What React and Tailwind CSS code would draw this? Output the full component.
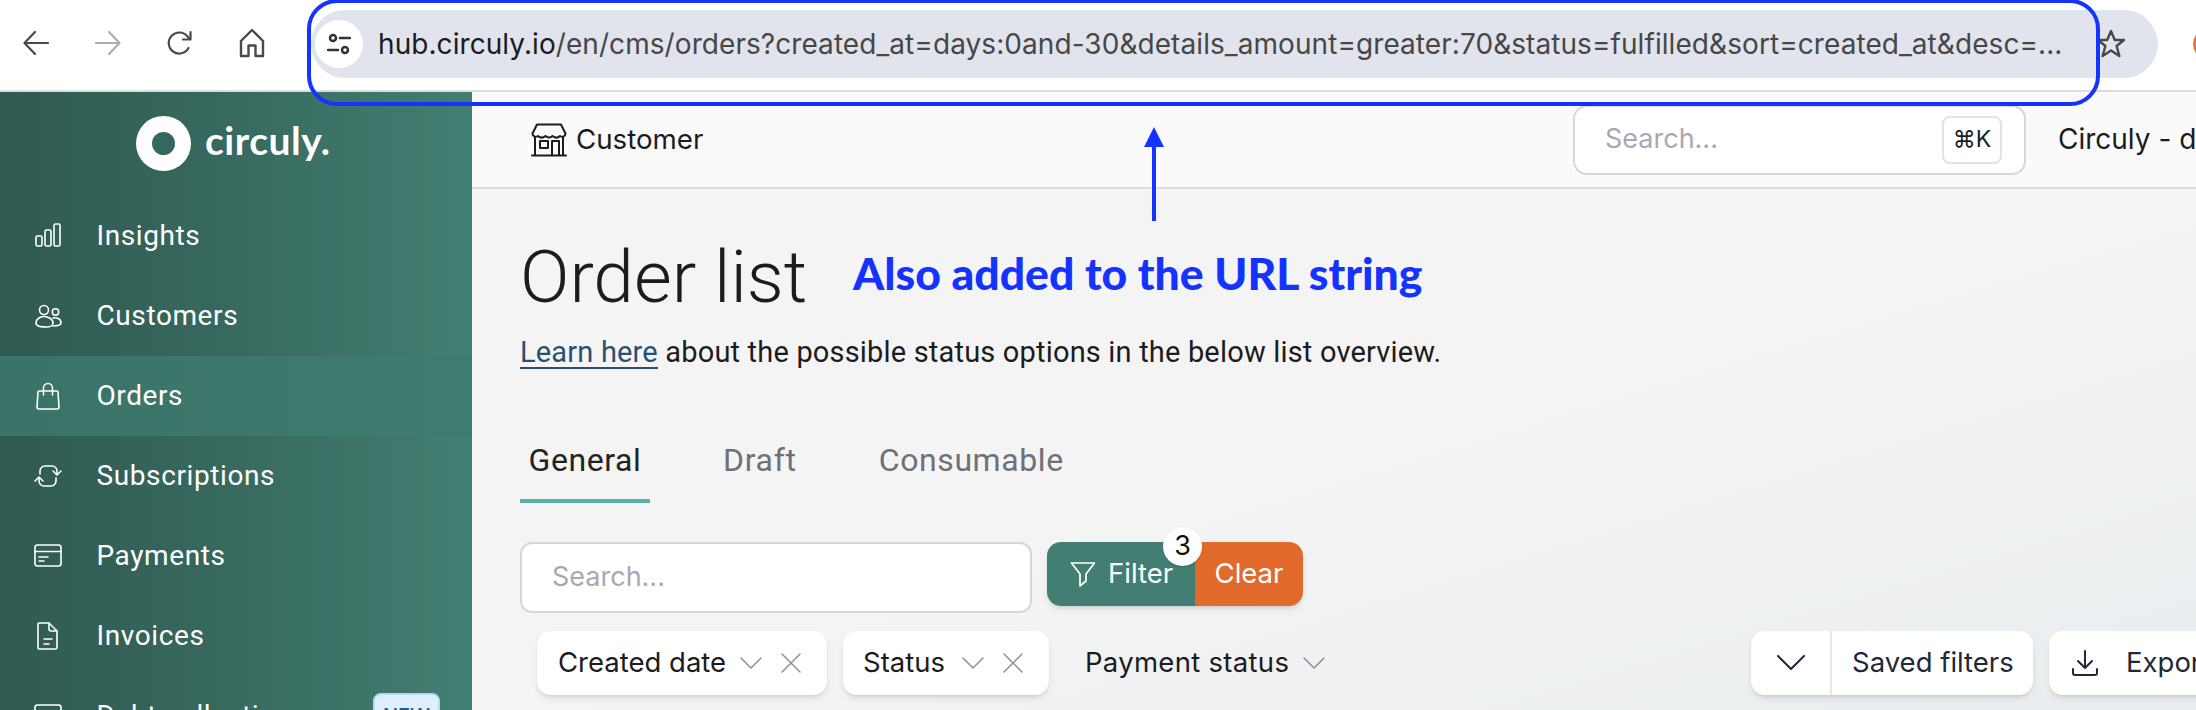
import React from "react";

const Ic = ({ w = 28, h = 28, vb = "0 0 28 28", sw = 2, className = "", children }) => (
  <svg width={w} height={h} viewBox={vb} fill="none" stroke="currentColor" strokeWidth={sw} strokeLinecap="round" strokeLinejoin="round" className={"shrink-0 " + className}>
    {children}
  </svg>
);

const Chevron = ({ className = "" }) => (
  <Ic w={22} h={12} vb="0 0 22 12" sw={1.5} className={className}><path d="M1 1l10 10L21 1" /></Ic>
);
const Cross = () => (
  <Ic w={20} h={20} vb="0 0 20 20" sw={1.5} className="text-[#8f8f96]"><path d="M1 1l18 18M19 1L1 19" /></Ic>
);

const nav = [
  { label: "Insights", icon: <><rect x="2" y="14" width="6" height="10" rx="1.5" /><rect x="11" y="8" width="6" height="16" rx="1.5" /><rect x="20" y="2" width="6" height="22" rx="1.5" /></> },
  { label: "Customers", icon: <><circle cx="10" cy="8" r="4.5" /><circle cx="21.5" cy="10" r="3.2" /><path d="M13 25c-5 0-11-.3-11-4 0-4 4-6.500 8-6.500s9 2.500 9 6.500c0 2.500-3 4-6 4z" /><path d="M19 16c3-.8 8 .5 8 4.500 0 2-2 3.500-8 3.500" /></> },
  { label: "Orders", active: true, icon: <><path d="M5 9h18a1 1 0 0 1 1 1l1 15a2 2 0 0 1-2 2H5a2 2 0 0 1-2-2l1-15a1 1 0 0 1 1-1z" /><path d="M9.500 13V6a4.500 4.500 0 0 1 9 0v7" /></> },
  { label: "Subscriptions", icon: <><path d="M6 12V9a5 5 0 0 1 5-5h7a5 5 0 0 1 5 5v3" /><path d="M19 9l4 4 4-4" /><path d="M22 16v3a5 5 0 0 1-5 5h-7a5 5 0 0 1-5-5v-3" /><path d="M1 19l4-4 4 4" /></> },
  { label: "Payments", icon: <><rect x="1" y="3" width="26" height="21" rx="2.500" /><path d="M1 9.500h26M5 15h9M5 19h5" /></> },
  { label: "Invoices", icon: <><path d="M5 1h10l8 8v16a2 2 0 0 1-2 2H5a1 1 0 0 1-1-1V2a1 1 0 0 1 1-1z" /><path d="M15 1v6a2 2 0 0 0 2 2h6M10 17h8M10 22h5" /></> },
  { label: "Debt collection", badge: true, icon: <><rect x="1" y="3" width="26" height="21" rx="2.500" /><path d="M1 9.500h26" /></> },
];

export default function App() {
  return (
    <div className="relative w-[2196px] h-[710px] overflow-hidden bg-white font-['Inter',sans-serif] text-[#1c1c1e]">
      {/* browser toolbar */}
      <div className="flex items-start h-[90px] bg-white pl-[23px]">
        <div className="flex items-center gap-[46px] h-[86px] text-[#4a4a4a]">
          <Ic w={26} h={24} vb="0 0 26 24" sw={2.200}><path d="M25 12H2M12 1L1.500 12 12 23" /></Ic>
          <Ic w={26} h={24} vb="0 0 26 24" sw={2.200} className="text-[#adadad]"><path d="M1 12h23M14 1l10.500 11L14 23" /></Ic>
          <Ic w={26} h={26} vb="0 0 26 26" sw={2.200}><path d="M21.500 18a10.500 10.500 0 1 1-1-11.500L23 9" /><path d="M23.500 2v7.500H16" /></Ic>
          <Ic w={26} h={30} vb="0 0 26 30" sw={2.400}><path d="M2 13L13 2l11 11v15h-7.500V17.500h-7V28H2z" /></Ic>
        </div>
        <div className="flex items-center ml-[46px] mt-[10px] w-[1847px] h-[68px] rounded-[34px] bg-[#e1e4ec] pl-[4px] shrink-0">
          <div className="flex items-center justify-center w-[48px] h-[48px] rounded-full bg-white shrink-0 text-[#333]">
            <Ic w={24} h={24} vb="0 0 24 24" sw={2.500}><circle cx="6" cy="6" r="3" /><path d="M13 6h10M1 18h10" /><circle cx="18" cy="18" r="3" /></Ic>
          </div>
          <div className="ml-[15px] text-[28px] leading-[34px] tracking-[0.07px] whitespace-nowrap w-[1716px] overflow-hidden text-[#474747]">
            <span className="text-[#1c1c1e]">hub.circuly.io</span>/en/cms/orders?created_at=days:0and-30&amp;details_amount=greater:70&amp;status=fulfilled&amp;sort=created_at&amp;desc=...
          </div>
          <Ic w={32} h={32} vb="0 0 32 32" sw={2.400} className="ml-[1px] text-[#474747]"><path d="M16 3l3.800 9h9.200l-7.400 6 2.800 10L16 22.500 7.600 28l2.800-10L3 12h9.200z" /></Ic>
        </div>
        <div className="ml-[35px] mt-[28px] w-[32px] h-[32px] rounded-full bg-[#e8704a] shrink-0" />
      </div>
      <div className="h-[2px] bg-[#dcdddc]" />

      <div className="flex h-[618px]">
        {/* sidebar */}
        <aside className="w-[472px] shrink-0 bg-gradient-to-r from-[#2f5a52] via-[#36665c] via-40% to-[#427f72] text-white overflow-hidden">
          <div className="flex items-center h-[104px] pl-[136px] pb-[2px]">
            <div className="flex items-center justify-center w-[55px] h-[55px] rounded-full bg-white shrink-0">
              <div className="w-[23px] h-[23px] rounded-full bg-[#36675e]" />
            </div>
            <span className="ml-[14px] mb-[6px] text-[39px] leading-[48px] font-bold font-['Lato',sans-serif] tracking-[0.5px]">circuly.</span>
          </div>
          {nav.map((n) => (
            <div key={n.label} className={"flex items-center h-20 pl-[34px] gap-[34.5px] " + (n.active ? "bg-gradient-to-r from-[#3a7367] to-[#3f7c70]" : "")}>
              <Ic sw={1.600}>{n.icon}</Ic>
              <span className="text-[28px] tracking-[0.6px] font-['Roboto',sans-serif] whitespace-nowrap">{n.label}</span>
              {n.badge && (
                <span className="ml-auto mr-[32px] flex items-center justify-center w-[67px] h-[46px] rounded-[8px] border-2 border-[#b8daf5] bg-[#e0effc] text-[#2a5a8a] text-[20px] font-medium">NEW</span>
              )}
            </div>
          ))}
        </aside>

        {/* main */}
        <main className="flex-1 min-w-0 flex flex-col overflow-hidden">
          <header className="flex items-center h-[97px] shrink-0 bg-[#fafafa] border-b-2 border-[#dcdddc] pl-[59px]">
            <Ic w={36} h={34} vb="0 0 36 34" sw={2} className="text-[#1c1c1e]">
              <path d="M6 1.500h24l4.500 9c0 3-3 4-5.500 2.500-2 2-5 2-7.500 0-2 2-5 2-7 0-2.500 2-5.500 2-7.500 0C4.500 14.500 1.500 13.500 1.500 10.500z" />
              <path d="M4 14v18M32 14v18M1 32.500h34" />
              <rect x="9" y="18" width="8" height="7" /><path d="M21 32V18h7v14" />
            </Ic>
            <span className="ml-[9px] w-[126px] text-[27.7px] leading-[36px] pb-[2px] whitespace-nowrap">Customer</span>
            <div className="flex items-center justify-between ml-[871px] w-[453px] h-[70px] shrink-0 rounded-[14px] border-2 border-[#d5d7dc] bg-white pl-[30px] pr-[22px]">
              <span className="text-[27px] text-[#a8a8b2]">Search...</span>
              <span className="flex items-center justify-center w-[60px] h-[48px] rounded-[8px] border-2 border-[#e2e2e2] text-[23px]">⌘K</span>
            </div>
            <span className="ml-[32px] text-[28px] leading-[36px] pb-[2px] whitespace-nowrap">Circuly - demo</span>
          </header>

          <div className="flex-1 bg-gradient-to-br from-[#f4f4f4] from-50% to-[#e9edef] pl-[48px]">
            <h1 className="mt-[46px] h-[84px] text-[73px] leading-[84px] font-light font-['Roboto',sans-serif] text-[#1c1c1e]">Order list</h1>
            <p className="mt-[16px] text-[29px] leading-[34px] tracking-[0.18px] font-['Roboto',sans-serif] whitespace-nowrap">
              <a className="text-[#2a5070] underline underline-offset-[5px] decoration-2">Learn here</a> about the possible status options in the below list overview.
            </p>

            <div className="flex mt-[66px] text-[32px] leading-[40px] text-[#707078] font-['Roboto',sans-serif]">
              <div className="w-[130px] h-[68px] pt-[5px] text-center text-[#222] border-b-4 border-[#5ab3a0] tracking-[0.6px]">General</div>
              <div className="ml-[73px] pt-[5px] tracking-[0.7px]">Draft</div>
              <div className="ml-[82px] pt-[5px] tracking-[0.6px]">Consumable</div>
            </div>

            <div className="flex items-start mt-[39px]">
              <div className="flex items-center w-[512px] h-[71px] rounded-[12px] border-2 border-[#d5d7dc] bg-white pl-[30px] text-[27px] text-[#a8a8b2]">Search...</div>
              <div className="relative flex ml-[15px] h-[64px] rounded-[14px] text-white text-[27.5px] shadow-md">
                <div className="flex items-center w-[148px] pl-[23px] gap-[12px] rounded-l-[14px] bg-[#427f72]">
                  <Ic w={26} h={26} vb="0 0 26 26" sw={1.700}><path d="M1.500 2h23L16 13v7l-6 5V13z" /></Ic>
                  Filter
                </div>
                <div className="flex items-center justify-center w-[108px] rounded-r-[14px] bg-[#e26a2c]">Clear</div>
                <div className="absolute left-[116px] top-[-15px] flex items-center justify-center w-[39px] h-[39px] rounded-full bg-white text-[#111] text-[27px] shadow">3</div>
              </div>
            </div>

            <div className="flex items-center mt-[17px] ml-[17px] h-[65px] text-[27.5px]">
              <div className="flex items-center w-[290px] h-[64px] shrink-0 rounded-[14px] bg-white shadow-md pl-[21px]">
                <span className="w-[168px] whitespace-nowrap">Created date</span>
                <Chevron className="ml-[14px] text-[#8f8f96]" />
                <span className="ml-[19px]"><Cross /></span>
              </div>
              <div className="flex items-center ml-[16px] w-[206px] h-[64px] shrink-0 rounded-[14px] bg-white shadow-md pl-[20px]">
                <span className="w-[85px] whitespace-nowrap">Status</span>
                <Chevron className="ml-[14px] text-[#8f8f96]" />
                <span className="ml-[19px]"><Cross /></span>
              </div>
              <span className="ml-[36px] w-[205px] shrink-0 tracking-[0.3px] whitespace-nowrap">Payment status</span>
              <Chevron className="ml-[13px] text-[#8f8f96]" />
              <div className="flex items-center ml-[426px] w-[282px] h-[64px] shrink-0 rounded-[14px] bg-white shadow-md text-[#1f2937]">
                <div className="flex items-center justify-center w-[81px] h-full border-r-2 border-[#e5e7eb]">
                  <Ic w={28} h={16} vb="0 0 28 16" sw={2}><path d="M1 1l13 13L27 1" /></Ic>
                </div>
                <span className="ml-[20px] whitespace-nowrap">Saved filters</span>
              </div>
              <div className="flex items-center ml-[16px] w-[220px] h-[64px] shrink-0 rounded-[14px] bg-white shadow-md pl-[23px] text-[#1f2937]">
                <Ic w={26} h={26} vb="0 0 26 26" sw={2}><path d="M13 1v17M6 11l7 7 7-7M1 19v4a2 2 0 0 0 2 2h20a2 2 0 0 0 2-2v-4" /></Ic>
                <span className="ml-[28px] whitespace-nowrap">Export</span>
              </div>
            </div>
          </div>
        </main>
      </div>

      {/* annotation overlays */}
      <div className="absolute left-[307px] top-[-1px] w-[1793px] h-[107px] rounded-[30px] border-4 border-[#1433ff] pointer-events-none" />
      <svg className="absolute left-[1144px] top-[127px]" width="20" height="95" viewBox="0 0 20 95">
        <path d="M10 0L20 20H12V94H8V20H0z" fill="#1433ff" />
      </svg>
      <div className="absolute left-[853px] top-[248px] text-[44.5px] leading-[50px] font-black font-['Lato',sans-serif] text-[#1433ff] whitespace-nowrap">Also added to the URL string</div>
    </div>
  );
}
